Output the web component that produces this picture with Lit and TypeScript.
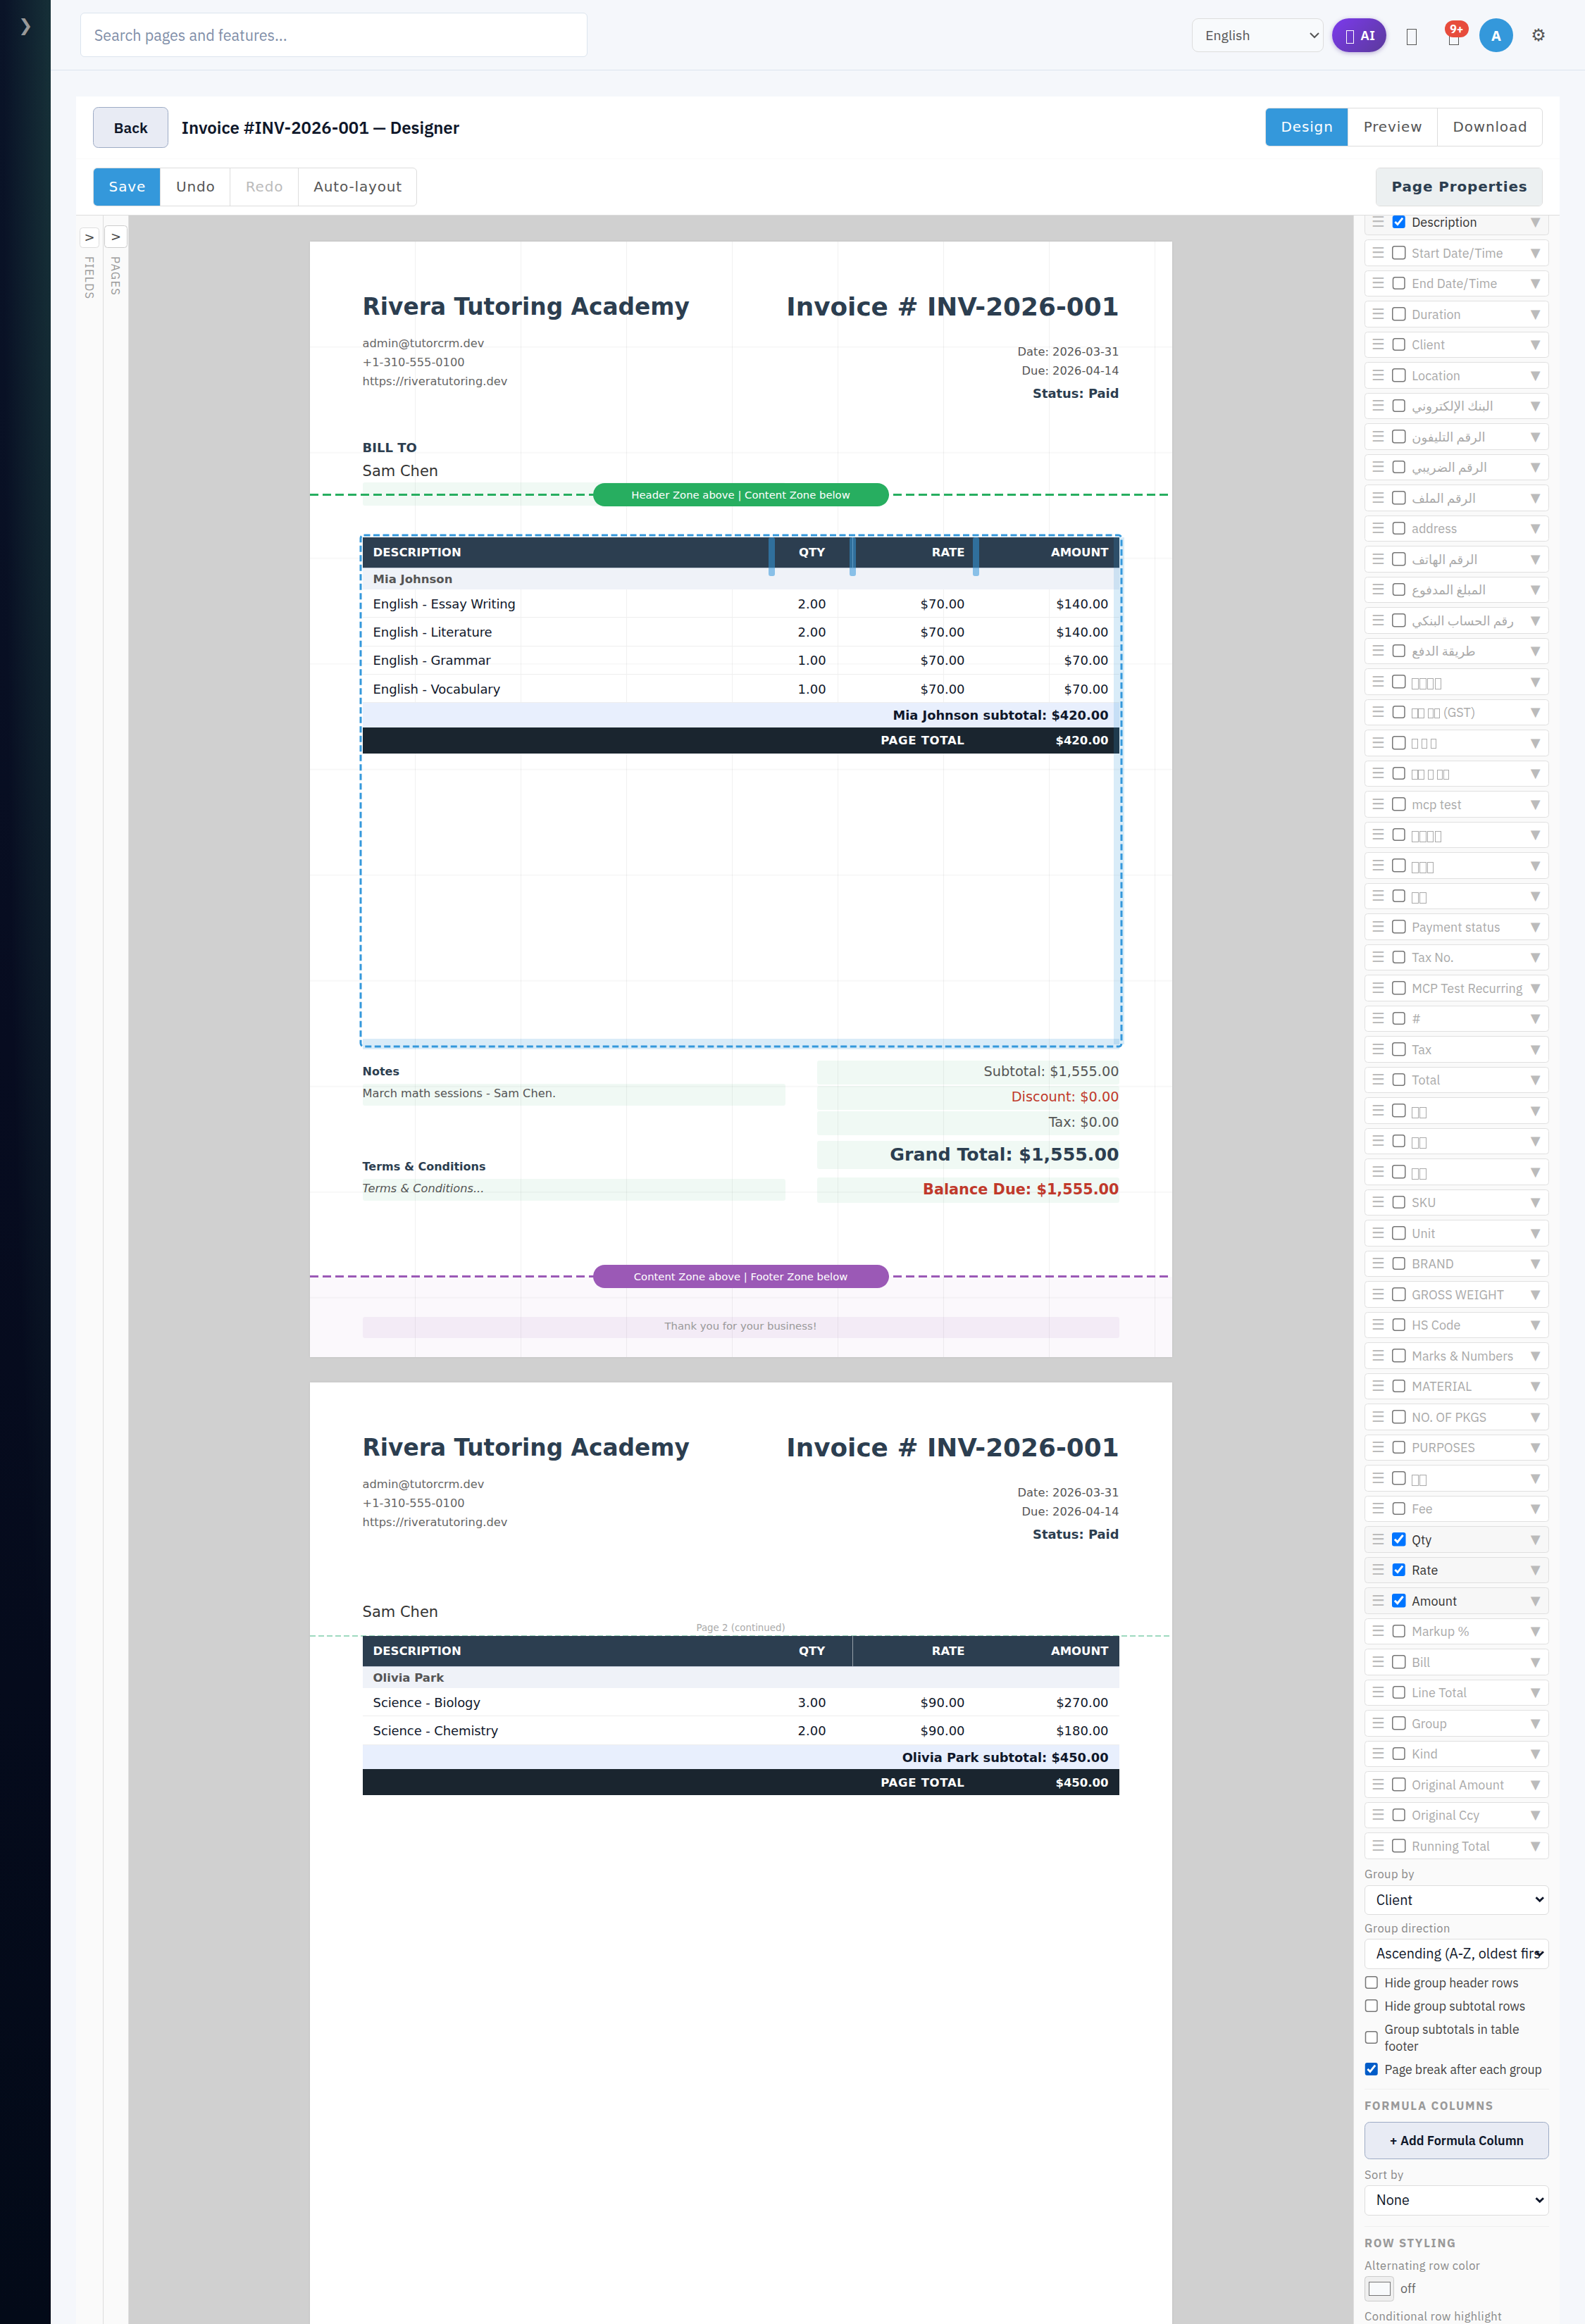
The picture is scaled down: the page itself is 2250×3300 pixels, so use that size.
import {LitElement, css, html, nothing, svg} from 'lit';
import {customElement, property} from 'lit/decorators.js';
import {classMap} from 'lit/directives/class-map.js';
import {styleMap} from 'lit/directives/style-map.js';

interface Block {
  kind: string;
  x: number;
  y: number;
  w: number;
  h?: number;
  text?: string;
}

interface TableGroup {
  name: string;
  rows: string[][];
  subtotal: string;
}

const HEADER_BLOCKS: Block[] = [
  {kind: 'company', x: 50, y: 49.6, w: 330, text: 'Rivera Tutoring Academy'},
  {kind: 'heading', x: 366, y: 47.4, w: 400, text: 'Invoice # INV-2026-001'},
  {kind: 'contact', x: 50, y: 87.3, w: 300, text: 'admin@tutorcrm.dev'},
  {kind: 'contact', x: 50, y: 105.3, w: 300, text: '+1-310-555-0100'},
  {kind: 'contact', x: 50, y: 123.3, w: 300, text: 'https://riveratutoring.dev'},
  {kind: 'date', x: 466, y: 95.6, w: 300, text: 'Date: 2026-03-31'},
  {kind: 'date', x: 466, y: 113.6, w: 300, text: 'Due: 2026-04-14'},
  {kind: 'status', x: 466, y: 135.2, w: 300, text: 'Status: Paid'},
  {kind: 'client', x: 50, y: 208.6, w: 300, text: 'Sam Chen'},
];

const FIRST_PAGE_BLOCKS: Block[] = [
  {kind: 'bill-to', x: 50, y: 186.2, w: 300, text: 'BILL TO'},
  {kind: 'slot', x: 50, y: 228, w: 400, h: 22},
  {kind: 'label', x: 50, y: 778.9, w: 300, text: 'Notes'},
  {kind: 'slot note', x: 50, y: 797.3, w: 400, h: 21, text: 'March math sessions - Sam Chen.'},
  {kind: 'label', x: 50, y: 868.9, w: 300, text: 'Terms & Conditions'},
  {kind: 'slot note hint', x: 50, y: 887.3, w: 400, h: 21, text: 'Terms & Conditions...'},
  {kind: 'slot sum', x: 480, y: 775.3, w: 286, h: 22.6, text: 'Subtotal: $1,555.00'},
  {kind: 'slot sum red', x: 480, y: 799.3, w: 286, h: 22.6, text: 'Discount: $0.00'},
  {kind: 'slot sum', x: 480, y: 823.3, w: 286, h: 22.6, text: 'Tax: $0.00'},
  {kind: 'slot grand', x: 480, y: 851.3, w: 286, h: 26.6, text: 'Grand Total: $1,555.00'},
  {kind: 'slot balance', x: 480, y: 886, w: 286, h: 24, text: 'Balance Due: $1,555.00'},
  {kind: 'footer-zone', x: 0, y: 980, w: 816, h: 76},
  {kind: 'footer-slot', x: 50, y: 1018, w: 716, h: 20, text: 'Thank you for your business!'},
];

const MIA: TableGroup = {
  name: 'Mia Johnson',
  rows: [
    ['English - Essay Writing', '2.00', '$70.00', '$140.00'],
    ['English - Literature', '2.00', '$70.00', '$140.00'],
    ['English - Grammar', '1.00', '$70.00', '$70.00'],
    ['English - Vocabulary', '1.00', '$70.00', '$70.00'],
  ],
  subtotal: '$420.00',
};

const OLIVIA: TableGroup = {
  name: 'Olivia Park',
  rows: [
    ['Science - Biology', '3.00', '$90.00', '$270.00'],
    ['Science - Chemistry', '2.00', '$90.00', '$180.00'],
  ],
  subtotal: '$450.00',
};

// '□' and '▯' stand for wide and narrow characters without a glyph
const COLUMNS = [
  'Description', 'Start Date/Time', 'End Date/Time', 'Duration', 'Client', 'Location',
  'البنك الإلكتروني', 'الرقم التليفون', 'الرقم الضريبي', 'الرقم الملف', 'address',
  'الرقم الهاتف', 'المبلغ المدفوع', 'رقم الحساب البنكي', 'طريقة الدفع',
  '□□□□', '▯▯ ▯▯ (GST)', '▯ ▯ ▯', '▯▯ ▯ ▯▯', 'mcp test', '□□□□', '□□□', '□□',
  'Payment status', 'Tax No.', 'MCP Test Recurring', '#', 'Tax', 'Total',
  '□□', '□□', '□□', 'SKU', 'Unit', 'BRAND', 'GROSS WEIGHT', 'HS Code', 'Marks & Numbers',
  'MATERIAL', 'NO. OF PKGS', 'PURPOSES', '□□', 'Fee', 'Qty', 'Rate', 'Amount',
  'Markup %', 'Bill', 'Line Total', 'Group', 'Kind', 'Original Amount', 'Original Ccy',
  'Running Total',
];

const SHOWN = new Set(['Description', 'Qty', 'Rate', 'Amount']);

const selectionFrame = svg`<rect x="-2" y="-2" width="720" height="484" rx="3" fill="none" stroke="#3498db" stroke-width="2" stroke-dasharray="6 3"/>`;

@customElement('invoice-page')
export class InvoicePage extends LitElement {

  @property({type: Boolean})
  continued = false;

  static get styles() {
    return [
      css`
        :host {
          background: #fff;
          box-shadow: 0 0 2px rgba(0, 0, 0, .08);
          display: block;
          flex: none;
          font-family: 'DejaVu Sans', sans-serif;
          height: 1056px;
          position: relative;
          width: 816px;
        }
        .grid {
          background-image:
            linear-gradient(to right, transparent 99.3px, rgba(0, 0, 0, .055) 99.3px),
            linear-gradient(to bottom, transparent 99px, rgba(0, 0, 0, .028) 99px);
          background-position: 0 .5px;
          background-size: 100px 100px;
          inset: 0;
          position: absolute;
        }
        .block {
          box-sizing: border-box;
          position: absolute;
          white-space: nowrap;
        }
        .company {
          color: #2c3e50;
          font-size: 21.88px;
          font-weight: 700;
          line-height: 26px;
        }
        .heading {
          color: #2c3e50;
          font-size: 23.9px;
          font-weight: 700;
          line-height: 29px;
          text-align: right;
        }
        .contact, .date {
          color: #666;
          font-size: 10.85px;
          line-height: 18px;
        }
        .date {
          color: #555;
          text-align: right;
        }
        .status, .bill-to {
          color: #2c3e50;
          font-size: 12px;
          font-weight: 700;
          line-height: 18px;
        }
        .status {
          font-size: 11.95px;
          text-align: right;
        }
        .client {
          color: #333;
          font-size: 14px;
          line-height: 18px;
        }
        .label {
          color: #2c3e50;
          font-size: 10.67px;
          font-weight: 700;
          line-height: 14px;
        }
        .slot {
          background: rgba(39, 174, 96, .07);
          border-radius: 2px;
        }
        .note {
          color: #555;
          font-size: 10.8px;
          line-height: 19px;
        }
        .hint {
          font-style: italic;
        }
        .sum, .grand, .balance {
          color: #555;
          font-size: 12.9px;
          line-height: 21.2px;
          text-align: right;
        }
        .red {
          color: #c0392b;
        }
        .grand {
          color: #2c3e50;
          font-size: 16.85px;
          font-weight: 700;
          line-height: 26.4px;
        }
        .balance {
          color: #c0392b;
          font-size: 13.88px;
          font-weight: 700;
          line-height: 23.6px;
        }
        .footer-zone {
          background: rgba(155, 89, 182, .04);
        }
        .footer-slot {
          background: rgba(155, 89, 182, .08);
          border-radius: 2px;
          color: #999;
          font-size: 9.9px;
          line-height: 18px;
          text-align: center;
        }
        .zone {
          align-items: center;
          background: repeating-linear-gradient(to right, var(--zone) 0 8px, transparent 8px 12px) 0 10.2px / 100% 2px no-repeat;
          display: flex;
          height: 22px;
          justify-content: center;
          left: 0;
          position: absolute;
          width: 816px;
        }
        .zone span {
          background: var(--zone);
          border-radius: 11px;
          color: #fff;
          font-size: 9.87px;
          height: 22px;
          line-height: 22.6px;
          text-align: center;
          width: 280px;
        }
        .zone.header {
          --zone: #27ae60;
          top: 229px;
        }
        .zone.footer {
          --zone: #9b59b6;
          top: 969px;
        }
        .break {
          background: repeating-linear-gradient(to right, #9ddabf 0 5.3px, transparent 5.3px 8px);
          height: 1px;
          left: 0;
          position: absolute;
          top: 239.6px;
          width: 816px;
        }
        .continued {
          color: #aaa;
          font-size: 8.9px;
          left: 0;
          line-height: 12px;
          position: absolute;
          text-align: center;
          top: 227.1px;
          width: 816px;
        }
        .table {
          height: 480px;
          left: 50px;
          position: absolute;
          top: 280px;
          width: 716px;
        }
        .table.plain {
          top: 240px;
        }
        .frame {
          height: 100%;
          left: 0;
          overflow: visible;
          position: absolute;
          top: 0;
          width: 100%;
        }
        .row {
          align-items: center;
          border-bottom: 1px solid #eee;
          box-sizing: border-box;
          color: #0f172a;
          display: grid;
          font-size: 12px;
          grid-template-columns: 386.7px 77.3px 116px 136px;
          height: 26.83px;
        }
        .row > * {
          padding: .7px 10px 0;
          text-align: right;
        }
        .row > :nth-child(1) {
          letter-spacing: -.07px;
          text-align: left;
        }
        .row > :nth-child(2) {
          text-align: center;
        }
        .row.head {
          background: linear-gradient(rgba(255, 255, 255, .5), rgba(255, 255, 255, .5)) 463.6px 0 / .7px 100% no-repeat #2c3e50;
          border-bottom-color: #c3c9d6;
          color: #fff;
          font-size: 11px;
          font-weight: 700;
          height: 29.33px;
        }
        .row.head > * {
          letter-spacing: 0;
          padding-top: 0;
        }
        .group, .subtotal {
          background: #eff2f8;
          box-sizing: border-box;
          color: #555;
          font-size: 11px;
          font-weight: 700;
          height: 20.4px;
          line-height: 20.8px;
          padding: 0 10px;
        }
        .subtotal {
          background: #e8effd;
          color: #0f172a;
          font-size: 11.9px;
          height: 22.95px;
          line-height: 24.4px;
          text-align: right;
        }
        .row.total {
          background: #1a252f;
          border: none;
          color: #fff;
          font-size: 11px;
          font-weight: 700;
          height: 24.87px;
        }
        .row.total > :nth-child(1) {
          grid-column: span 3;
          letter-spacing: .45px;
          text-align: right;
        }
        .row.total > :nth-child(2) {
          text-align: right;
        }
        .handle {
          background: rgba(52, 152, 219, .55);
          border-radius: 2px;
          height: 37px;
          position: absolute;
          top: 0;
          width: 6px;
        }
        .resize-x, .resize-y {
          background: rgba(52, 152, 219, .19);
          position: absolute;
        }
        .resize-x {
          height: 100%;
          right: -5px;
          top: 0;
          width: 10px;
        }
        .resize-y {
          bottom: -5px;
          height: 10px;
          left: 0;
          width: 100%;
        }
      `,
    ];
  }

  renderBlock(b: Block) {
    const place = {
      left: `${b.x}px`,
      top: `${b.y}px`,
      width: `${b.w}px`,
      height: b.h ? `${b.h}px` : 'auto',
    };
    return html`<div class="block ${b.kind}" style=${styleMap(place)}>${b.text ?? nothing}</div>`;
  }

  renderTable(group: TableGroup) {
    return html`
      <div class="row head"><span>DESCRIPTION</span><span>QTY</span><span>RATE</span><span>AMOUNT</span></div>
      <div class="group">${group.name}</div>
      ${group.rows.map((cells) => html`<div class="row">${cells.map((c) => html`<span>${c}</span>`)}</div>`)}
      <div class="subtotal">${group.name} subtotal: ${group.subtotal}</div>
      <div class="row total"><span>PAGE TOTAL</span><span>${group.subtotal}</span></div>
    `;
  }

  render() {
    if (this.continued) {
      return html`
        ${HEADER_BLOCKS.map((b) => this.renderBlock(b))}
        <div class="break"></div>
        <div class="continued">Page 2 (continued)</div>
        <div class="table plain">${this.renderTable(OLIVIA)}</div>
      `;
    }
    return html`
      <div class="grid"></div>
      ${[...HEADER_BLOCKS, ...FIRST_PAGE_BLOCKS].map((b) => this.renderBlock(b))}
      <div class="zone header"><span>Header Zone above | Content Zone below</span></div>
      <div class="table">
        ${this.renderTable(MIA)}
        ${[384, 461, 577.3].map((x) => html`<div class="handle" style=${styleMap({left: `${x}px`})}></div>`)}
        <div class="resize-x"></div>
        <div class="resize-y"></div>
        <svg class="frame">${selectionFrame}</svg>
      </div>
      <div class="zone footer"><span>Content Zone above | Footer Zone below</span></div>
    `;
  }
}

@customElement('app-root')
export class AppRoot extends LitElement {

  static get styles() {
    return [
      css`
        :host {
          background: #f5f7fb;
          color: #0f172a;
          display: flex;
          font-family: 'IBM Plex Sans', 'Noto Sans', 'DejaVu Sans', sans-serif;
          height: 2200px;
          overflow: hidden;
          width: 1500px;
          zoom: 1.5;
        }
        button, select, input {
          font-family: inherit;
          margin: 0;
        }
        .sidebar {
          background:
            radial-gradient(ellipse 46px 1500px at 50px 100px, rgba(45, 100, 85, .37), transparent),
            linear-gradient(180deg, #0a1428, #070c20 45%, #030a18);
          box-sizing: border-box;
          color: #999;
          flex: none;
          font-family: 'DejaVu Sans', sans-serif;
          font-size: 16px;
          line-height: 18px;
          padding: 15.6px 0 0 17.5px;
          width: 48px;
        }
        .main {
          display: flex;
          flex: 1;
          flex-direction: column;
          min-width: 0;
        }
        .topbar {
          align-items: center;
          border-bottom: 1px solid #dbe4ee;
          box-sizing: border-box;
          display: flex;
          gap: 8px;
          height: 66.67px;
          padding: 0 28px;
        }
        .search {
          align-items: center;
          background: #fff;
          border: 1px solid #dbe4ee;
          border-radius: 4px;
          box-sizing: border-box;
          color: #7f8ea8;
          display: flex;
          font-size: 14.4px;
          height: 41.5px;
          margin-right: auto;
          padding: .8px 12.5px 0;
          width: 480px;
        }
        .language {
          background: #f8fafc;
          border: 1px solid #ddd;
          border-radius: 6px;
          color: #555;
          font-size: 13px;
          height: 32px;
          padding: 0 8px;
          width: 124.6px;
        }
        .ai {
          align-items: center;
          background: linear-gradient(135deg, #7c3aed, #5b3a9b);
          border-radius: 16px;
          box-shadow: 0 1px 4px rgba(91, 58, 155, .4);
          box-sizing: border-box;
          color: #fff;
          display: flex;
          font-size: 12.6px;
          font-weight: 600;
          gap: 6px;
          height: 32px;
          padding-left: 13px;
          width: 51.3px;
        }
        .icon {
          align-items: center;
          color: #555;
          display: flex;
          font-family: 'DejaVu Sans', sans-serif;
          font-size: 16px;
          height: 32px;
          justify-content: center;
          position: relative;
          width: 32px;
        }
        .missing {
          border: 1px solid;
          box-sizing: border-box;
          height: 15.4px;
          margin-top: 4px;
          width: 9.6px;
        }
        .ai .missing {
          height: 12.8px;
          margin-top: 4px;
          width: 7.8px;
        }
        .badge {
          background: #e74c3c;
          border-radius: 8px;
          color: #fff;
          font-family: 'IBM Plex Sans', 'Noto Sans', sans-serif;
          font-size: 10.67px;
          font-weight: 700;
          left: 7px;
          line-height: 16px;
          position: absolute;
          text-align: center;
          top: 2px;
          width: 23px;
        }
        .avatar {
          background: #3498db;
          border-radius: 50%;
          color: #fff;
          font-family: inherit;
          font-size: 14px;
          font-weight: 700;
        }
        .card {
          background: #fff;
          display: flex;
          flex: 1;
          flex-direction: column;
          margin: 24.5px 24px 0;
          min-height: 0;
        }
        .title-row, .tool-row {
          align-items: center;
          box-sizing: border-box;
          display: flex;
          justify-content: space-between;
          padding: 0 16px;
        }
        .title-row {
          border-bottom: 1px solid #fafafa;
          height: 59.3px;
        }
        .tool-row {
          border-bottom: 1px solid #ddd;
          height: 53.7px;
        }
        .title {
          align-items: center;
          display: flex;
          font-size: 16px;
          font-weight: 600;
          gap: 12.4px;
        }
        .back, .add {
          background: #e8ebf4;
          border: 1px solid #9dabc5;
          border-radius: 5px;
          box-sizing: border-box;
          color: #0f172a;
          font-size: 14px;
          font-weight: 600;
          height: 38.67px;
          padding: 0;
          width: 71.5px;
        }
        .segments {
          border: 1px solid #ddd;
          border-radius: 4px;
          display: flex;
          font-family: 'DejaVu Sans', sans-serif;
          font-size: 13.33px;
          letter-spacing: .57px;
          line-height: 15.33px;
          overflow: hidden;
        }
        .segments span {
          color: #555;
          padding: 10px 13.6px 10px 14.4px;
        }
        .segments span + span {
          border-left: 1px solid #ddd;
        }
        .segments span.on {
          background: #3498db;
          color: #fff;
        }
        .segments span.off {
          color: #bbb;
        }
        .segments span.props {
          background: #ecf0f1;
          color: #2c3e50;
          font-weight: 700;
        }
        .workspace {
          display: flex;
          flex: 1;
          min-height: 0;
        }
        .rail {
          align-items: center;
          background: #fafafa;
          border-right: 1px solid #ddd;
          box-sizing: border-box;
          color: #999;
          display: flex;
          flex: none;
          flex-direction: column;
          font-size: 11px;
          gap: 8.2px;
          padding-top: 9px;
          width: 24px;
        }
        .rail.fields {
          padding-top: 11px;
          width: 26px;
        }
        .rail b {
          background: #fff;
          border: 1px solid #ccc;
          border-radius: 3px;
          box-sizing: border-box;
          color: #444;
          font-family: 'DejaVu Sans', sans-serif;
          font-size: 12px;
          font-weight: 400;
          height: 21.3px;
          line-height: 20px;
          text-align: center;
          width: 22px;
        }
        .rail.fields b {
          border-color: #ddd;
          height: 19.3px;
          line-height: 17.5px;
          width: 19px;
        }
        .rail span {
          letter-spacing: .75px;
          line-height: 14px;
          margin-right: 1px;
          writing-mode: vertical-rl;
        }
        .canvas {
          align-items: center;
          background: #d0d0d0;
          display: flex;
          flex: 1;
          flex-direction: column;
          gap: 24px;
          overflow: hidden;
          padding: 24.3px .6px 0 0;
        }
        .panel {
          background: #fafafa;
          border-left: 1px solid #e0e0e0;
          box-sizing: border-box;
          flex: none;
          overflow: hidden;
          padding: 0 10px;
          width: 195.3px;
        }
        .columns {
          display: flex;
          flex-direction: column;
          gap: 4px;
          margin-top: -6.4px;
        }
        .column {
          align-items: center;
          background: #fff;
          border: 1px solid #e0e0e0;
          border-radius: 3px;
          box-sizing: border-box;
          color: #aaa;
          display: flex;
          font-size: 12px;
          height: 25px;
          padding: 0 7.6px 0 6px;
          white-space: pre;
        }
        .column.shown {
          background: #f7f7f7;
          color: #333;
        }
        .column i {
          color: #bbb;
          font-family: 'DejaVu Sans', sans-serif;
          font-size: 14px;
          font-style: normal;
          line-height: 16px;
        }
        .column i:last-child {
          font-size: 12px;
        }
        .column input {
          height: 13px;
          margin: 0 5.8px 0 6.8px;
          width: 13px;
        }
        .column .name {
          flex: 1;
          padding-top: .6px;
        }
        .wide, .narrow {
          border: .7px solid;
          box-sizing: border-box;
          display: inline-block;
          height: 10.7px;
          margin-right: .8px;
          vertical-align: -2.6px;
          width: 6.4px;
        }
        .narrow {
          height: 9.4px;
          margin-right: .5px;
          vertical-align: -1px;
          width: 5.5px;
        }
        .caption {
          box-sizing: border-box;
          color: #888;
          font-size: 11px;
          height: 24.6px;
          letter-spacing: .3px;
          line-height: 17px;
          padding-top: 6.1px;
        }
        .caption.tight {
          height: 22.8px;
          padding-top: 4.5px;
        }
        .caption.flat {
          height: 16px;
          line-height: 12px;
          padding-top: 0;
        }
        .select {
          background: #fff;
          border: 1px solid #ddd;
          border-radius: 4px;
          box-sizing: border-box;
          font-size: 13.2px;
          height: 28.3px;
          line-height: 26.6px;
          padding: 0 7px 0 10.4px;
          position: relative;
        }
        .select div {
          overflow: hidden;
          white-space: nowrap;
        }
        .select svg {
          height: 7px;
          position: absolute;
          right: 3.6px;
          top: 9.6px;
          width: 9px;
        }
        .options {
          display: flex;
          flex-direction: column;
          gap: 6px;
          padding-top: 5.4px;
        }
        .option {
          align-items: center;
          color: #444;
          display: flex;
          font-size: 11.85px;
          gap: 6px;
          line-height: 16px;
        }
        .option input {
          flex: none;
          height: 13px;
          width: 13px;
        }
        .option.hover input {
          accent-color: #005cc8;
        }
        .section {
          border-top: 1px solid #eee;
          color: #999;
          font-size: 11px;
          font-weight: 700;
          letter-spacing: 1.1px;
          line-height: 16px;
          margin-top: 10px;
          padding: 7.4px 0 7.6px;
        }
        .add {
          display: block;
          font-size: 12px;
          height: 35.5px;
          width: 100%;
        }
        .swatch-row {
          align-items: center;
          color: #666;
          display: flex;
          font-size: 12px;
          gap: 6px;
        }
        .swatch {
          background: #efefef;
          border: 1px solid #ccc;
          border-radius: 3px;
          box-sizing: border-box;
          height: 23.6px;
          padding: 4.6px 3px;
          width: 28px;
        }
        .swatch div {
          background: #f8fafc;
          border: 1px solid #777;
          box-sizing: border-box;
          height: 100%;
        }
      `,
    ];
  }

  renderName(name: string) {
    return [...name].map((ch) => {
      if (ch === '□') return html`<span class="wide"></span>`;
      if (ch === '▯') return html`<span class="narrow"></span>`;
      return ch;
    });
  }

  renderColumn(name: string) {
    const shown = SHOWN.has(name);
    const label = /[□▯]/.test(name) ? this.renderName(name) : name;
    return html`<div class=${classMap({column: true, shown})}><i>☰</i><input type="checkbox" .checked=${shown}><span class="name">${label}</span><i>▼</i></div>`;
  }

  renderSelect(value: string) {
    return html`
      <div class="select">
        <div>${value}</div>
        <svg viewBox="0 0 9 7"><path d="M1 1.5 4.5 4.8 8 1.5" fill="none" stroke="#0f172a" stroke-width="1.9"/></svg>
      </div>
    `;
  }

  renderOption(text: string, checked = false) {
    return html`<label class=${classMap({option: true, hover: checked})}><input type="checkbox" .checked=${checked}><span>${text}</span></label>`;
  }

  render() {
    return html`
      <nav class="sidebar">❯</nav>
      <div class="main">
        <header class="topbar">
          <div class="search">Search pages and features...</div>
          <select class="language"><option>English</option></select>
          <div class="ai"><span class="missing"></span>AI</div>
          <div class="icon"><span class="missing"></span></div>
          <div class="icon"><span class="missing"></span><span class="badge">9+</span></div>
          <div class="icon avatar">A</div>
          <div class="icon">⚙</div>
        </header>
        <section class="card">
          <div class="title-row">
            <div class="title"><button class="back">Back</button>Invoice #INV-2026-001 — Designer</div>
            <div class="segments"><span class="on">Design</span><span>Preview</span><span>Download</span></div>
          </div>
          <div class="tool-row">
            <div class="segments">
              <span class="on">Save</span><span>Undo</span><span class="off">Redo</span><span>Auto-layout</span>
            </div>
            <div class="segments"><span class="props">Page Properties</span></div>
          </div>
          <div class="workspace">
            <div class="rail fields"><b>&gt;</b><span>FIELDS</span></div>
            <div class="rail"><b>&gt;</b><span>PAGES</span></div>
            <div class="canvas">
              <invoice-page></invoice-page>
              <invoice-page continued></invoice-page>
            </div>
            <aside class="panel">
              <div class="columns">${COLUMNS.map((name) => this.renderColumn(name))}</div>
              <div class="caption">Group by</div>
              ${this.renderSelect('Client')}
              <div class="caption tight">Group direction</div>
              ${this.renderSelect('Ascending (A-Z, oldest first)')}
              <div class="options">
                ${this.renderOption('Hide group header rows')}
                ${this.renderOption('Hide group subtotal rows')}
                ${this.renderOption('Group subtotals in table footer')}
                ${this.renderOption('Page break after each group', true)}
              </div>
              <div class="section">FORMULA COLUMNS</div>
              <button class="add">+ Add Formula Column</button>
              <div class="caption">Sort by</div>
              ${this.renderSelect('None')}
              <div class="section">ROW STYLING</div>
              <div class="caption flat">Alternating row color</div>
              <div class="swatch-row"><div class="swatch"><div></div></div>off</div>
              <div class="caption">Conditional row highlight</div>
            </aside>
          </div>
        </section>
      </div>
    `;
  }
}
